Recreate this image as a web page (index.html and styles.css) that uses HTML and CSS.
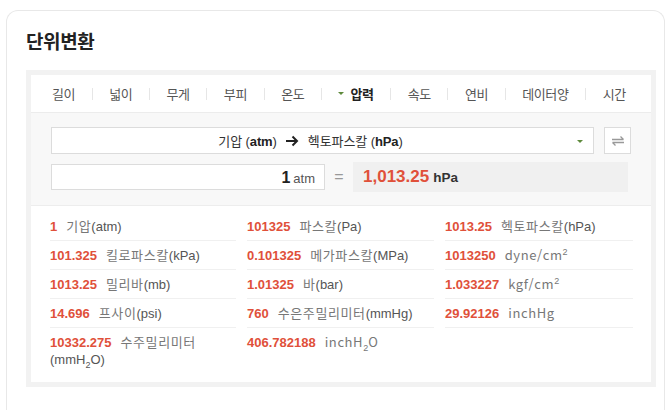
FILE: index.html
```html
<!DOCTYPE html>
<html lang="ko">
<head>
<meta charset="utf-8">
<link rel="stylesheet" href="styles.css">
</head>
<body>
<div class="card">
  <h2 class="title">단위변환</h2>
  <div class="box">
    <div class="panel">
      <ul class="tabs">
        <li class="tab">길이</li><li class="sep"></li>
        <li class="tab">넓이</li><li class="sep"></li>
        <li class="tab">무게</li><li class="sep"></li>
        <li class="tab">부피</li><li class="sep"></li>
        <li class="tab">온도</li><li class="sep"></li>
        <li class="tab active"><span class="tri"></span>압력</li><li class="sep"></li>
        <li class="tab">속도</li><li class="sep"></li>
        <li class="tab">연비</li><li class="sep"></li>
        <li class="tab">데이터양</li><li class="sep"></li>
        <li class="tab">시간</li>
      </ul>
      <div class="conv">
        <div class="conv-row">
          <div class="select">
            <span class="sel-text">기압 (<b>atm</b>)
              <svg class="arrow" width="14" height="12" viewBox="0 0 14 12"><path d="M1 6H12M7.5 1.5L12 6L7.5 10.5" fill="none" stroke="#222" stroke-width="2"/></svg>
              헥토파스칼 (<b>hPa</b>)</span>
            <span class="dd"></span>
          </div>
          <div class="swap">
            <svg width="14" height="12" viewBox="0 0 14 12"><path d="M1 4.5H12.5M9.5 1.5L12.5 4.5M13 7.5H1.5M4.5 10.5L1.5 7.5" fill="none" stroke="#999" stroke-width="1.3"/></svg>
          </div>
        </div>
        <div class="conv-row second">
          <div class="input"><b class="in-num">1</b> <span class="in-unit">atm</span></div>
          <span class="eq">=</span>
          <div class="result"><b class="res-num">1,013.25</b> <b class="res-unit">hPa</b></div>
        </div>
      </div>
      <div class="results">
        <div class="cell"><b class="num">1</b><span class="lbl">기압<span class="en">(atm)</span></span></div>
        <div class="cell"><b class="num">101325</b><span class="lbl">파스칼<span class="en">(Pa)</span></span></div>
        <div class="cell"><b class="num">1013.25</b><span class="lbl">헥토파스칼<span class="en">(hPa)</span></span></div>
        <div class="cell"><b class="num">101.325</b><span class="lbl">킬로파스칼<span class="en">(kPa)</span></span></div>
        <div class="cell"><b class="num">0.101325</b><span class="lbl">메가파스칼<span class="en">(MPa)</span></span></div>
        <div class="cell"><b class="num">1013250</b><span class="lbl">dyne/cm<sup>2</sup></span></div>
        <div class="cell"><b class="num">1013.25</b><span class="lbl">밀리바<span class="en">(mb)</span></span></div>
        <div class="cell"><b class="num">1.01325</b><span class="lbl">바<span class="en">(bar)</span></span></div>
        <div class="cell"><b class="num">1.033227</b><span class="lbl">kgf/cm<sup>2</sup></span></div>
        <div class="cell"><b class="num">14.696</b><span class="lbl">프사이<span class="en">(psi)</span></span></div>
        <div class="cell"><b class="num">760</b><span class="lbl">수은주밀리미터<span class="en">(mmHg)</span></span></div>
        <div class="cell"><b class="num">29.92126</b><span class="lbl">inchHg</span></div>
        <div class="cell last"><b class="num">10332.275</b><span class="lbl">수주밀리미터<br><span class="en">(mmH<sub>2</sub>O)</span></span></div>
        <div class="cell last"><b class="num">406.782188</b><span class="lbl">inchH<sub>2</sub>O</span></div>
        <div class="cell last"></div>
      </div>
    </div>
  </div>
</div>
</body>
</html>
```
FILE: styles.css
```css
html, body {
  margin: 0;
  padding: 0;
  background: #fff;
}
body {
  font-family: "Liberation Sans", "Noto Sans CJK KR", sans-serif;
  color: #333;
}
.card {
  margin: 10px 0 0 6px;
  width: 659px;
  height: 400px;
  box-sizing: border-box;
  border: 1px solid #e8e8e8;
  border-bottom: none;
  border-radius: 12px 12px 0 0;
  padding: 18px 10px 0 19px;
}
.title {
  margin: 0 0 17px 0;
  font-family: "Noto Sans CJK KR", sans-serif;
  font-size: 19px;
  line-height: 24px;
  font-weight: 700;
  letter-spacing: -0.4px;
  color: #222;
}
.box {
  width: 630px;
  box-sizing: border-box;
  padding: 5px;
  background: #f2f2f2;
}
.panel {
  background: #fff;
}
.tabs {
  list-style: none;
  margin: 0;
  padding: 0 25px 0 21px;
  height: 37px;
  display: flex;
  align-items: center;
  justify-content: space-between;
  border-bottom: 1px solid #ececec;
}
.tab {
  font-family: "Noto Sans CJK KR", sans-serif;
  font-size: 13px;
  letter-spacing: -0.4px;
  color: #555;
  display: flex;
  align-items: center;
}
.tab.active {
  color: #222;
  font-weight: 700;
}
.tri {
  width: 0;
  height: 0;
  border-left: 3px solid transparent;
  border-right: 3px solid transparent;
  border-top: 3px solid #5e8a3c;
  margin-right: 6px;
}
.sep {
  width: 1px;
  height: 12px;
  background: #e6e6e6;
}
.conv {
  background: #f8f8f8;
  padding: 14px 20px 13px 20px;
  border-bottom: 1px solid #ededed;
}
.conv-row {
  display: flex;
  align-items: center;
}
.conv-row.second {
  margin-top: 8px;
}
.select {
  width: 543px;
  height: 27px;
  box-sizing: border-box;
  border: 1px solid #dcdcdc;
  background: #fff;
  display: flex;
  align-items: center;
  position: relative;
  padding-right: 24px;
}
.sel-text {
  flex: 1;
  text-align: center;
  font-size: 13px;
  color: #333;
  letter-spacing: -0.1px;
}
.sel-text b {
  color: #222;
}
.arrow {
  margin: 0 5px;
  vertical-align: -1px;
}
.dd {
  position: absolute;
  right: 10px;
  top: 12px;
  width: 0;
  height: 0;
  border-left: 3px solid transparent;
  border-right: 3px solid transparent;
  border-top: 3px solid #5e8a3c;
}
.swap {
  margin-left: 10px;
  width: 27px;
  height: 27px;
  box-sizing: border-box;
  border: 1px solid #dcdcdc;
  background: #fff;
  display: flex;
  align-items: center;
  justify-content: center;
}
.input {
  width: 274px;
  height: 26px;
  box-sizing: border-box;
  border: 1px solid #dcdcdc;
  background: #fff;
  display: flex;
  align-items: baseline;
  justify-content: flex-end;
  padding: 4px 9px 0 0;
}
.in-num {
  font-size: 16px;
  color: #222;
  margin-right: 3px;
}
.in-unit {
  font-size: 13px;
  color: #555;
}
.eq {
  width: 28px;
  text-align: center;
  font-size: 16px;
  color: #999;
}
.result {
  width: 275px;
  height: 30px;
  box-sizing: border-box;
  background: #f0f0f0;
  display: flex;
  align-items: baseline;
  padding: 5px 0 0 10px;
}
.res-num {
  font-size: 17px;
  color: #e0503a;
  margin-right: 4px;
}
.res-unit {
  font-size: 13.5px;
  color: #333;
}
.results {
  display: grid;
  grid-template-columns: 186px 187px 188px;
  column-gap: 11px;
  padding: 6px 21px 8px 19px;
}
.cell {
  height: 16px;
  padding: 6px 0;
  line-height: 16px;
  font-size: 13px;
  border-bottom: 1px solid #f0f0f0;
  white-space: nowrap;
}
.cell.last {
  height: auto;
  border-bottom: none;
}
.num {
  color: #e0503a;
  margin-right: 9px;
}
.lbl {
  font-family: "Noto Sans CJK KR", sans-serif;
  color: #777;
  letter-spacing: 0.6px;
}
.lbl .en, .lbl sup, .lbl sub {
  font-family: "Liberation Sans", sans-serif;
  letter-spacing: 0;
}
.en {
  color: #555;
}
sup, sub {
  font-size: 9px;
  line-height: 0;
}
```
